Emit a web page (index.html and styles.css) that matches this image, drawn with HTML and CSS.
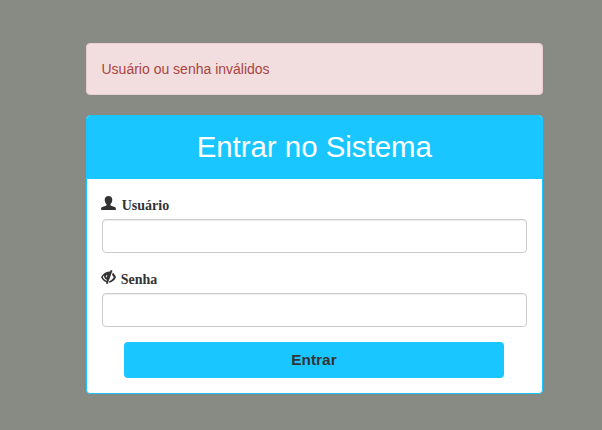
FILE: index.html
```html
<!DOCTYPE html>
<html lang="pt-BR">
<head>
<meta charset="utf-8">
<title>Entrar no Sistema</title>
<link rel="stylesheet" href="styles.css">
</head>
<body>
<main class="login">
  <div class="alert">Usuário ou senha inválidos</div>
  <section class="panel">
    <div class="panel-heading"><h2>Entrar no Sistema</h2></div>
    <form class="panel-body">
      <div class="field">
        <label for="user">
          <svg class="icon icon-user" width="15" height="14" viewBox="0 0 15 14"><path d="M7.5 0C5.2 0 3.700 1.400 3.700 3.700c0 1.700.6 3.300 1.800 4.300v1.200c-.2.500-1.600.9-3 1.400C.9 11.200.1 11.600.1 12.700V14h14.800v-1.300c0-1.100-.8-1.500-2.400-2.100-1.400-.5-2.800-.9-3-1.400V8c1.200-1 1.800-2.600 1.800-4.300C11.300 1.400 9.800 0 7.500 0z"/></svg>
          <span>Usuário</span>
        </label>
        <input id="user" type="text">
      </div>
      <div class="field">
        <label for="pass">
          <svg class="icon icon-eye" width="15" height="14" viewBox="0 0 15 14"><path d="M9.700 0 9.200 1.500C5.600 1 2.200 3.200 0 7.200c1.400 2.500 3.100 4.200 5.300 5.100L4.900 13.500l1.700.5L11.500.5zM3 5.200C2.900 7.500 4 9.300 6.200 9.900L5.900 10.700C4.200 10.100 2.800 9 1.800 7.200c.4-.8.800-1.400 1.200-2zm2.100.4c.7-.6 1.500-.2 1.400.3-.8.3-1.100.9-.9 1.700-.8-.2-1-1.500-.5-2z" fill-rule="evenodd"/><path d="M11.700 2.700c1.500 1 2.500 2.500 3.300 4.500-1.500 3.200-3.900 5.200-7.300 5.600l.7-1.900c2-.5 3.400-1.800 4.300-3.700-.4-.9-1-1.700-1.700-2.300z"/></svg>
          <span>Senha</span>
        </label>
        <input id="pass" type="password">
      </div>
      <button type="button">Entrar</button>
    </form>
  </section>
</main>
</body>
</html>
```
FILE: styles.css
```css
* { box-sizing: border-box; }
body {
  margin: 0;
  min-height: 430px;
  background: #888a84;
  color: #333;
  font: 14px/20px "Liberation Sans", Arial, sans-serif;
}
.login { width: 457px; margin-left: 85.5px; padding-top: 43px; }
.alert {
  height: 52px;
  padding: 15px;
  margin-bottom: 20px;
  color: #a94442;
  background: #f2dede;
  border: 1px solid #ebccd1;
  border-radius: 4px;
}
.panel {
  background: #fff;
  border: 1px solid #1ac6ff;
  border-radius: 4px;
}
.panel-heading {
  height: 63px;
  padding: 15px 14.5px 15px 15px;
  background: #1ac6ff;
  color: #fff;
  text-align: center;
  border-radius: 3px 3px 0 0;
}
h2 { margin: 0; font-size: 29.4px; line-height: 32px; font-weight: 400; }
.panel-body { padding: 15px; }
.field { margin-bottom: 15px; }
label {
  display: flex;
  height: 20px;
  margin-bottom: 5px;
  font: bold 14px/23px "Liberation Serif", "Times New Roman", serif;
}
.icon { fill: #333; margin: 2px 0 0 -.5px; }
.icon-user + span { margin-left: 5.75px; }
.icon-eye + span { margin-left: 4.75px; }
input {
  display: block;
  width: 100%;
  height: 34px;
  padding: 6px 12px;
  border: 1px solid #ccc;
  border-radius: 4px;
  box-shadow: inset 0 1px 1px rgba(0, 0, 0, .075);
}
button {
  display: block;
  width: 380px;
  height: 36px;
  margin-left: 22px;
  padding: 0 0 0 1px;
  border: 0;
  border-radius: 4px;
  background: #1ac6ff;
  color: #333;
  font: bold 15.4px/20px "Liberation Sans", Arial, sans-serif;
}
```
